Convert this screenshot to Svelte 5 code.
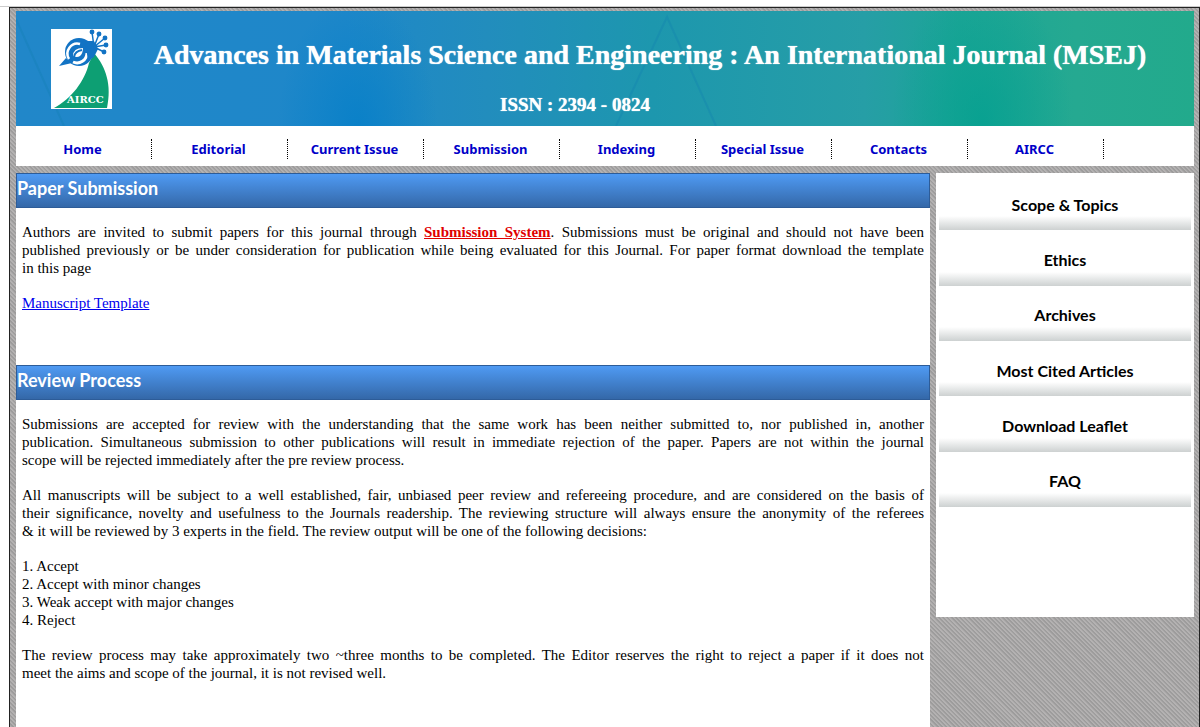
<script>
  //Links of the top menu
  let menuLinks = ["Home", "Editorial", "Current Issue", "Submission", "Indexing", "Special Issue", "Contacts", "AIRCC"];

  //Links of the side menu
  let sideLinks = ["Scope & Topics", "Ethics", "Archives", "Most Cited Articles", "Download Leaflet", "FAQ"];
</script>

<!-- Thin line above the page -->
<div class="shell">
<!-- Main container element -->
<div class="page">
  <!-- Banner with logo and journal name -->
  <header class="banner">
    <svg class="banner-lines" viewBox="0 0 1178 115" preserveAspectRatio="none" aria-hidden="true">
      <path d="M0 8 L48 115 M600 115 L651 6 L700 115" />
    </svg>
    <svg class="logo" viewBox="0 0 61 80" role="img" aria-label="AIRCC logo">
      <rect width="61" height="80" fill="#fff" />
      <path d="M43 24 C55 38 61 56 56 79 H3 C20 70 34 52 38 34 Z" fill="#0d9f73" />
      <path d="M8 37 L15 29 L21 34 Z" fill="#1273c4" />
      <circle cx="28" cy="23" r="14" fill="#1273c4" />
      <path d="M18 30 A10 10 0 0 1 29 15" fill="none" stroke="#fff" stroke-width="2.5" />
      <path d="M36 24 A10 10 0 0 1 22 33" fill="none" stroke="#fff" stroke-width="3" />
      <path d="M22 27 Q22 19 32 19 Q32 24 29 27 Q26 29 22 27 Z" fill="#fff" />
      <path d="M23 28 Q24 22 31 21" fill="none" stroke="#1273c4" stroke-width="2" />
      <path d="M34 12 L43 12 L47 20 L43 28 L37 32 Z" fill="#1273c4" />
      <g stroke="#1273c4" stroke-width="1.5" fill="#1273c4">
        <path d="M43 18 L41 3 M43 18 L48 5 M43 18 L54 9 M43 18 L55 16 M43 18 L53 23" />
        <circle cx="41" cy="3" r="1.7" />
        <circle cx="48" cy="5" r="1.7" />
        <circle cx="54" cy="9" r="1.7" />
        <circle cx="55" cy="16" r="1.7" />
        <circle cx="53" cy="23" r="1.7" />
      </g>
      <text x="16" y="74" class="logo-text">AIRCC</text>
    </svg>
    <div class="banner-text">
      <h1>Advances in Materials Science and Engineering : An International Journal (MSEJ)</h1>
      <p>ISSN : 2394 - 0824</p>
    </div>
  </header>

  <!-- Top menu -->
  <nav class="menu">
    {#each menuLinks as link}
      <a href="#top">{link}</a>
    {/each}
  </nav>

  <div class="columns">
    <main class="content">
      <section class="first">
        <h2>Paper Submission</h2>
        <div class="text">
          <p>
            Authors are invited to submit papers for this journal through
            <a class="system" href="#submission">Submission System</a>. Submissions must be original and should not have been<br />
            published previously or be under consideration for publication while being evaluated for this Journal. For paper format download the template
            <span class="end">in this page</span>
          </p>
          <p class="list"><a href="#template">Manuscript Template</a></p>
        </div>
      </section>

      <section>
        <h2>Review Process</h2>
        <div class="text">
          <p>
            Submissions are accepted for review with the understanding that the same work has been neither submitted to, nor published in, another<br />
            publication. Simultaneous submission to other publications will result in immediate rejection of the paper. Papers are not within the journal
            <span class="end">scope will be rejected immediately after the pre review process.</span>
          </p>
          <p>
            All manuscripts will be subject to a well established, fair, unbiased peer review and refereeing procedure, and are considered on the basis of<br />
            their significance, novelty and usefulness to the Journals readership. The reviewing structure will always ensure the anonymity of the referees
            <span class="end">&amp; it will be reviewed by 3 experts in the field. The review output will be one of the following decisions:</span>
          </p>
          <p class="list">
            1. Accept<br />
            2. Accept with minor changes<br />
            3. Weak accept with major changes<br />
            4. Reject
          </p>
          <p>
            The review process may take approximately two ~three months to be completed. The Editor reserves the right to reject a paper if it does not
            <span class="end">meet the aims and scope of the journal, it is not revised well.</span>
          </p>
        </div>
      </section>
    </main>

    <!-- Side menu -->
    <aside class="side">
      <nav class="side-menu">
        {#each sideLinks as link}
          <a href="#side">{link}</a>
        {/each}
      </nav>
    </aside>
  </div>
</div>
</div>

<style>
  :global(body) {
    margin: 0;
    background: #fff;
  }

  .shell {
    margin-top: 6px;
    border-top: 1px solid #ccc;
  }

  .page {
    box-sizing: border-box;
    min-height: calc(100vh - 7px);
    margin-left: 9px;
    padding: 3px 5px 0 6px;
    border: 1px solid #222;
    border-bottom: none;
    background: repeating-linear-gradient(45deg, #b4b2b2 0 1px, #9d9c9c 2px 3px);
    display: flex;
    flex-direction: column;
  }

  .banner {
    position: relative;
    box-sizing: border-box;
    min-height: 115px;
    padding: 18px 34px 0 35px;
    display: flex;
    background:
      radial-gradient(ellipse 80px 130px at 29% 100%, #057fc8cc, #057fc800),
      radial-gradient(ellipse 90px 140px at 82% 95%, #04a090cc, #04a09000),
      linear-gradient(90deg, #2187c9 0%, #1e87c9 28%, #228dbd 40%, #1d97ae 54%, #269ea6 72%, #1ca596 80%, #25a991 90%, #22aa8c 100%);
  }

  .banner-lines {
    position: absolute;
    inset: 0;
    width: 100%;
    height: 100%;
    fill: none;
    stroke: #0f7fae;
    stroke-opacity: 0.3;
    stroke-width: 2;
  }

  .logo {
    position: relative;
    flex: none;
    width: 61px;
    height: 80px;
  }

  .logo-text {
    font: bold 10px "DejaVu Serif", serif;
    fill: #fff;
  }

  .banner-text {
    position: relative;
    flex: 1;
    color: #fff;
    font-family: "Liberation Serif", "Times New Roman", serif;
    font-weight: bold;
    text-align: center;
    text-shadow: 0 0 1px #fff;
    padding-left: 28px;
  }

  .banner-text h1 {
    margin: 10px 0 0;
    font-size: 28px;
    line-height: 32px;
  }

  .banner-text p {
    margin: 24px 0 0;
    padding-right: 150px;
    font-size: 19px;
    line-height: 20px;
  }

  .menu {
    box-sizing: border-box;
    display: flex;
    align-items: center;
    min-height: 40px;
    padding-top: 6px;
    background: #fff;
  }

  .menu a {
    box-sizing: border-box;
    flex: 0 1 136px;
    padding-right: 2px;
    border-right: 1px dotted #000;
    color: #0000c8;
    font: bold 13px/20px "Noto Sans", sans-serif;
    text-align: center;
    text-decoration: none;
  }

  .columns {
    flex: 1;
    display: flex;
    gap: 6px;
    margin-top: 7px;
  }

  .content {
    flex: 1;
    background: #fff;
  }

  .first {
    padding-bottom: 53px;
  }

  h2 {
    box-sizing: border-box;
    min-height: 35px;
    margin: 0;
    border: 1px solid #2d5c98;
    background: linear-gradient(#4f9af3, #3468a8);
    color: #fff;
    font: bold 18px/28px Lato, Calibri, sans-serif;
  }

  .text {
    padding: 15px 6px 0;
    font: 15px/18px "Liberation Serif", "Times New Roman", serif;
    text-align: justify;
    text-align-last: justify;
  }

  .text p {
    margin: 0 0 17px;
  }

  .text p:last-child {
    margin-bottom: 0;
  }

  /* Last line of a paragraph stays to the left */
  .text .end {
    display: block;
    text-align-last: left;
  }

  .text .list {
    text-align-last: left;
  }

  .text a {
    color: #0000ee;
  }

  .text .system {
    color: #e00000;
    font-weight: bold;
  }

  .side {
    box-sizing: border-box;
    flex: 0 0 258px;
    align-self: flex-start;
    min-height: 444px;
    padding: 2px 3px;
    background: #fff;
  }

  .side-menu {
    display: grid;
    grid-auto-rows: 1fr;
    min-height: 332px;
  }

  .side-menu a {
    display: flex;
    align-items: center;
    justify-content: center;
    padding-top: 4px;
    background: linear-gradient(#fff, #cdd1d1) bottom / 100% 14px no-repeat;
    color: #000;
    font: bold 16px/20px Lato, Calibri, sans-serif;
    text-decoration: none;
  }
</style>
